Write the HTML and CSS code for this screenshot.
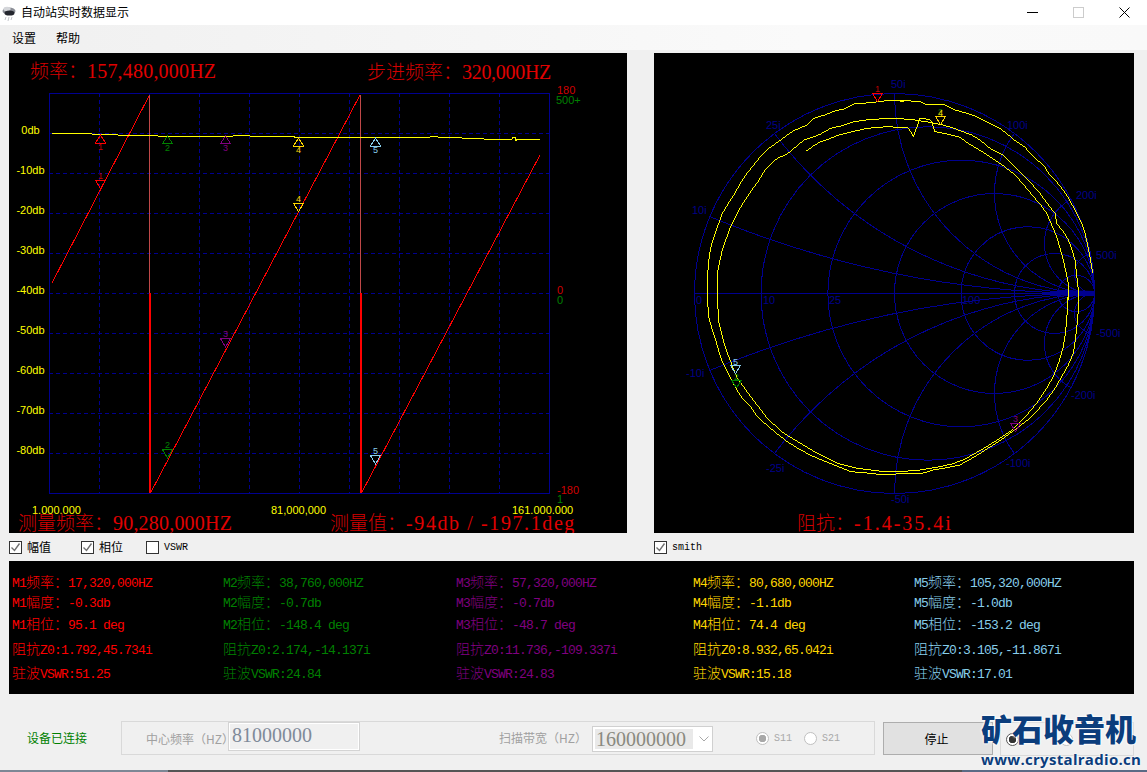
FILE: index.html
```html
<!DOCTYPE html>
<html lang="zh-CN">
<head>
<meta charset="utf-8">
<title>自动站实时数据显示</title>
<link rel="stylesheet" href="styles.css">
</head>
<body>
<div class="app">
  <header class="titlebar">
    <svg class="appicon" width="16" height="20" viewBox="0 0 16 20">
      <ellipse cx="8" cy="7" rx="6.5" ry="3.6" fill="#8b8e96"/>
      <ellipse cx="6" cy="5" rx="3.6" ry="2.2" fill="#d4d6da"/>
      <ellipse cx="8.5" cy="9" rx="5" ry="2.6" fill="#24262e"/>
      <path d="M5 13l-1 3M8 13l-1 4M11 13l-1 3" stroke="#c4c6cc" stroke-width="1" fill="none"/>
    </svg>
    <span class="title">自动站实时数据显示</span>
    <div class="winctl">
      <svg width="11" height="11" viewBox="0 0 11 11"><path d="M0 5.5H11" stroke="#000" fill="none"/></svg>
      <svg width="11" height="11" viewBox="0 0 11 11"><rect x=".5" y=".5" width="10" height="10" fill="none" stroke="#ccc"/></svg>
      <svg width="11" height="11" viewBox="0 0 11 11"><path d="M.5 .5L10.5 10.5M10.5 .5L.5 10.5" stroke="#000" fill="none"/></svg>
    </div>
  </header>
  <nav class="menubar"><span>设置</span><span>帮助</span></nav>

  <section class="charts">
    <svg class="panel chart" width="618" height="480" viewBox="9 53 618 480">
      <rect x="49.5" y="93.5" width="500" height="400" class="frame"/>
      <path class="grid" d="M99.5 93V493M149.5 93V493M199.5 93V493M249.5 93V493M299.5 93V493M349.5 93V493M399.5 93V493M449.5 93V493M499.5 93V493M49 133.5H549M49 173.5H549M49 213.5H549M49 253.5H549M49 293.5H549M49 333.5H549M49 373.5H549M49 413.5H549M49 453.5H549"/>
      <text class="big sp-a" x="30" y="78"><tspan class="cn">频率：</tspan>157,480,000HZ</text>
      <text class="big sp-d" x="367" y="79"><tspan class="cn">步进频率：</tspan>320,000HZ</text>
      <text class="ax yl mid" x="30.5" y="134">0db</text>
      <text class="ax yl mid" x="30.5" y="174">-10db</text>
      <text class="ax yl mid" x="30.5" y="214">-20db</text>
      <text class="ax yl mid" x="30.5" y="254">-30db</text>
      <text class="ax yl mid" x="30.5" y="294">-40db</text>
      <text class="ax yl mid" x="30.5" y="334">-50db</text>
      <text class="ax yl mid" x="30.5" y="374">-60db</text>
      <text class="ax yl mid" x="30.5" y="414">-70db</text>
      <text class="ax yl mid" x="30.5" y="454">-80db</text>
      <text class="ax rd" x="557" y="94">180</text>
      <text class="ax gn" x="556" y="104">500+</text>
      <text class="ax rd" x="557" y="294">0</text>
      <text class="ax gn" x="557" y="304">0</text>
      <text class="ax rd" x="557" y="494">-180</text>
      <text class="ax gn" x="557" y="503">1</text>
      <text class="ax yl" x="32" y="514">1.000.000</text>
      <text class="ax yl" x="271" y="514">81,000,000</text>
      <text class="ax yl" x="512" y="514">161.000.000</text>

      <polyline class="phase" points="52,283 149.5,95"/>
      <polyline class="phase" points="150.5,493 360,95"/>
      <polyline class="phase" points="361.5,493 540,155"/>
      <path class="wrap-top" d="M149.5 95V293M360.5 95V293"/>
      <path class="wrap-low" d="M150 293V493M361 293V493"/>
      <polyline class="amp" points="52,133 63,133 64,134 66,133 92,134 100,134 108,135 111,134 113,135 115,134 118,135 130,135 157,135 158,136 204,136 205,137 206,136 233,136 235,135 236,136 248,135.5 250,136 264,136 280,136 282,137 288,136 291,137 293,136 296,138 320,137.5 322,138 329,137 337,137 347,137 430,137 431,136 433,137 437,136 438,137 461,137 462,138 483,138 484,139 512,139 513,137 515,137 516,141 517,139 540,139"/>

      <g class="mk mk1"><polygon points="100.5,135 95.5,143 105.5,143"/><text class="mt" x="100.5" y="150">1</text>
        <polygon points="95.5,180.5 105.5,180.5 100.5,188.5"/><text class="mt" x="100.5" y="179">1</text></g>
      <g class="mk mk2"><polygon points="167.5,136 162.5,143.5 172.5,143.5"/><text class="mt" x="167.5" y="151">2</text>
        <polygon points="162.5,449.5 172.5,449.5 167.5,458"/><text class="mt" x="167.5" y="448">2</text></g>
      <g class="mk mk3"><polygon points="225.5,136 220.5,143.5 230.5,143.5"/><text class="mt" x="225.5" y="151">3</text>
        <polygon points="220.5,338.5 230.5,338.5 225.5,347"/><text class="mt" x="225.5" y="337">3</text></g>
      <g class="mk mk4"><polygon points="298.5,138 293.5,146 303.5,146"/><text class="mt" x="298.5" y="153">4</text>
        <polygon points="293.5,203.5 303.5,203.5 298.5,211.5"/><text class="mt" x="298.5" y="202">4</text></g>
      <g class="mk mk5"><polygon points="375.5,138 370.5,146 380.5,146"/><text class="mt" x="375.5" y="153">5</text>
        <polygon points="370.5,455.5 380.5,455.5 375.5,464"/><text class="mt" x="375.5" y="454">5</text></g>

      <text class="big sp-a" x="18" y="530"><tspan class="cn">测量频率：</tspan>90,280,000HZ</text>
      <text class="big sp-b" x="330" y="530"><tspan class="cn">测量值：</tspan>-94db / -197.1deg</text>
    </svg>

    <svg class="panel smith" width="480" height="480" viewBox="654 53 480 480">
      <defs><clipPath id="unit"><circle cx="894.5" cy="293.5" r="200"/></clipPath></defs>
      <g class="sg" clip-path="url(#unit)">
        <circle cx="927.8" cy="293.5" r="166.7"/>
        <circle cx="961.2" cy="293.5" r="133.3"/>
        <circle cx="994.5" cy="293.5" r="100"/>
        <circle cx="1027.8" cy="293.5" r="66.7"/>
        <circle cx="1054.5" cy="293.5" r="40"/>
        <circle cx="1076.3" cy="293.5" r="18.2"/>
        <circle cx="1094.5" cy="-706.5" r="1000"/>
        <circle cx="1094.5" cy="1293.5" r="1000"/>
        <circle cx="1094.5" cy="-106.5" r="400"/>
        <circle cx="1094.5" cy="693.5" r="400"/>
        <circle cx="1094.5" cy="93.5" r="200"/>
        <circle cx="1094.5" cy="493.5" r="200"/>
        <circle cx="1094.5" cy="193.5" r="100"/>
        <circle cx="1094.5" cy="393.5" r="100"/>
        <circle cx="1094.5" cy="243.5" r="50"/>
        <circle cx="1094.5" cy="343.5" r="50"/>
        <circle cx="1094.5" cy="273.5" r="20"/>
        <circle cx="1094.5" cy="313.5" r="20"/>
        <path d="M694 293.5H1095"/>
      </g>
      <circle class="sg" cx="894.5" cy="293.5" r="200"/>
      <polygon class="blob" points="1043,293 1065,290 1094,291 1094,296 1065,296"/>

      <text class="sl" x="891" y="88">50i</text>
      <text class="sl" x="766" y="129">25i</text>
      <text class="sl" x="692" y="214">10i</text>
      <text class="sl" x="1007" y="129">100i</text>
      <text class="sl" x="1076" y="199">200i</text>
      <text class="sl" x="1096" y="259">500i</text>
      <text class="sl" x="696" y="304">0</text>
      <text class="sl" x="763" y="304">10</text>
      <text class="sl" x="829" y="304">25</text>
      <text class="sl" x="962" y="304">100</text>
      <text class="sl" x="686" y="377">-10i</text>
      <text class="sl" x="766" y="472">-25i</text>
      <text class="sl" x="891" y="503">-50i</text>
      <text class="sl" x="1006" y="467">-100i</text>
      <text class="sl" x="1071" y="399">-200i</text>
      <text class="sl" x="1096" y="337">-500i</text>

      <g class="tr" transform="translate(654 60) scale(.33333)">
        <polyline points="160,700 161,650 163,610 168,575 175,545 187,510 205,460 222,432 240,405 258,372 275,345 295,320 315,295 345,265 380,240 400,225 420,212 440,203 460,195 480,175 512,165 545,152 570,147 600,132 650,128 700,122 750,122"/>
        <polyline points="190,700 190,640 197,605 205,570 217,535 230,500 255,450 272,422 290,395 310,368 330,335 350,312 370,295 400,282 420,265 450,240 475,232 500,222 530,205 565,197 600,185 650,178 700,176 750,175"/>
        <polyline points="457,273 478,258 500,245 530,235 555,225 600,214 640,205 700,200 750,203"/>
      </g>
      <g class="tr" transform="translate(900 60) scale(.33333)">
        <polyline points="0,125 20,122 60,125 75,132 135,135 165,150 200,160 230,170 265,188 300,205 322,222 340,238 375,262 405,295 430,315 450,345 478,375 500,405 515,432 530,460 545,490 555,520 563,555 570,590 578,640"/>
        <polyline points="535,720 535,690 530,645 525,600 515,565 505,540 490,515 470,490 465,460 440,428 420,400 395,372 370,345 340,315 310,285 270,265 240,240 215,225 170,208 130,195 90,187 45,180 0,176"/>
        <polyline points="505,720 505,670 490,600 470,530 455,495 440,460 420,432 400,410 372,375 345,345 320,325 300,310 262,285 230,265 205,250 180,232 140,222 105,215 95,185 88,178 60,175 40,230 25,203 0,203"/>
      </g>
      <g class="tr" transform="translate(654 290) scale(.33333)">
        <polyline points="160,10 162,50 165,85 175,120 185,150 195,185 205,215 220,245 235,275 250,302 265,325 290,350 310,380 330,398 350,415 375,436 400,455 440,480 465,493 490,505 540,525 590,545 650,550 690,555 750,550"/>
        <polyline points="190,10 192,55 195,100 205,140 215,175 232,220 250,265 270,292 290,320 315,352 340,385 365,408 390,430 440,460 490,490 550,520 610,535 690,545 750,545"/>
      </g>
      <g class="tr" transform="translate(900 290) scale(.33333)">
        <polyline points="0,550 60,552 100,540 140,533 180,525 210,508 240,490 275,468 310,445 350,415 390,385 415,358 440,330 465,295 485,260 505,225 520,190 526,150 530,115 535,60 535,0"/>
        <polyline points="0,545 60,540 120,530 155,522 190,510 225,490 260,470 295,448 330,425 372,385 410,340 437,300 460,260 477,215 490,170 496,130 500,90 503,45 505,0"/>
      </g>

      <g class="mk mk1"><polygon points="872.5,93.5 882.5,93.5 877.5,101.5"/><text class="mt" x="877.5" y="92">1</text></g>
      <g class="mk mk3"><polygon points="1010.5,423.5 1020.5,423.5 1015.5,431.5"/><text class="mt" x="1015.5" y="422">3</text></g>
      <g class="mk mk2"><polygon points="731.5,380.5 741.5,380.5 736.5,387.5"/><text class="mt" x="736.5" y="380">2</text></g>
      <g class="mk mk5"><polygon points="730.5,365.5 740.5,365.5 735.5,373.5"/><text class="mt" x="735.5" y="365">5</text></g>
      <g class="mk mk2"><text class="mt" x="940.5" y="115">2</text></g>
      <g class="mk mk4"><polygon points="935.5,116.5 945.5,116.5 940.5,124.5"/><text class="mt" x="940.5" y="116">4</text></g>

      <text class="big sp-c" x="797" y="530"><tspan class="cn">阻抗：</tspan>-1.4-35.4i</text>
    </svg>
  </section>

  <section class="checks">
    <label class="check w72"><span class="box"><svg width="11" height="11" viewBox="0 0 11 11"><path d="M1.5 5.5L4.5 8.5L9.5 1.5"/></svg></span><span class="lab">幅值</span></label>
    <label class="check w65"><span class="box"><svg width="11" height="11" viewBox="0 0 11 11"><path d="M1.5 5.5L4.5 8.5L9.5 1.5"/></svg></span><span class="lab">相位</span></label>
    <label class="check w508"><span class="box"></span><span class="lat">VSWR</span></label>
    <label class="check"><span class="box"><svg width="11" height="11" viewBox="0 0 11 11"><path d="M1.5 5.5L4.5 8.5L9.5 1.5"/></svg></span><span class="lat">smith</span></label>
  </section>

  <section class="data">
    <div class="cell c1">M1<span class="cn">频率：</span>17,320,000HZ</div>
    <div class="cell c1">M1<span class="cn">幅度：</span>-0.3db</div>
    <div class="cell c1">M1<span class="cn">相位：</span>95.1 deg</div>
    <div class="cell c1"><span class="cn">阻抗</span>Z0:1.792,45.734i</div>
    <div class="cell c1"><span class="cn">驻波</span>VSWR:51.25</div>

    <div class="cell c2">M2<span class="cn">频率：</span>38,760,000HZ</div>
    <div class="cell c2">M2<span class="cn">幅度：</span>-0.7db</div>
    <div class="cell c2">M2<span class="cn">相位：</span>-148.4 deg</div>
    <div class="cell c2"><span class="cn">阻抗</span>Z0:2.174,-14.137i</div>
    <div class="cell c2"><span class="cn">驻波</span>VSWR:24.84</div>

    <div class="cell c3">M3<span class="cn">频率：</span>57,320,000HZ</div>
    <div class="cell c3">M3<span class="cn">幅度：</span>-0.7db</div>
    <div class="cell c3">M3<span class="cn">相位：</span>-48.7 deg</div>
    <div class="cell c3"><span class="cn">阻抗</span>Z0:11.736,-109.337i</div>
    <div class="cell c3"><span class="cn">驻波</span>VSWR:24.83</div>

    <div class="cell c4">M4<span class="cn">频率：</span>80,680,000HZ</div>
    <div class="cell c4">M4<span class="cn">幅度：</span>-1.1db</div>
    <div class="cell c4">M4<span class="cn">相位：</span>74.4 deg</div>
    <div class="cell c4"><span class="cn">阻抗</span>Z0:8.932,65.042i</div>
    <div class="cell c4"><span class="cn">驻波</span>VSWR:15.18</div>

    <div class="cell c5">M5<span class="cn">频率：</span>105,320,000HZ</div>
    <div class="cell c5">M5<span class="cn">幅度：</span>-1.0db</div>
    <div class="cell c5">M5<span class="cn">相位：</span>-153.2 deg</div>
    <div class="cell c5"><span class="cn">阻抗</span>Z0:3.105,-11.867i</div>
    <div class="cell c5"><span class="cn">驻波</span>VSWR:17.01</div>
  </section>

  <section class="controls">
    <div class="status">设备已连接</div>
    <div class="group params">
      <span class="plabel">中心频率（HZ）</span>
      <span class="field">81000000</span>
      <span class="plabel second">扫描带宽（HZ）</span>
      <span class="select"><span class="selval">160000000</span>
        <svg width="10" height="6" viewBox="0 0 10 6"><path d="M.5 .5L5 5L9.5 .5"/></svg></span>
      <span class="radio on first"></span><span class="rlabel">S11</span>
      <span class="radio next"></span><span class="rlabel">S21</span>
    </div>
    <button class="stop">停止</button>
    <div class="group modes">
      <span class="radio dark"></span>
      <span class="radio gap"></span>
    </div>
  </section>
  <div class="strip"></div>

  <div class="watermark">
    <div class="wm-cn">矿石收音机</div>
    <div class="wm-en">www.crystalradio.cn</div>
  </div>
</div>
</body>
</html>
```

FILE: styles.css
```css
* { box-sizing: border-box; }
html, body { margin: 0; padding: 0; }
body { width: 1147px; height: 772px; overflow: hidden; background: #f0f0f0; font-family: "Noto Sans CJK SC", sans-serif; color: #000; }
.app { position: relative; width: 1147px; height: 772px; display: flex; flex-direction: column; }

.titlebar { height: 25px; background: #fff; display: flex; align-items: center; position: relative; }
.appicon { margin-left: 1px; margin-top: 2px; flex: none; }
.title { margin-left: 4px; font-size: 12px; line-height: 25px; margin-top: -2px; }
.winctl { margin-left: auto; margin-right: 17px; display: flex; gap: 35px; margin-top: -1px; }
.winctl svg { display: block; }

.menubar { height: 25px; display: flex; padding-left: 12px; gap: 20px; font-size: 12px; line-height: 25px; background: linear-gradient(90deg, #f0f0f0, #fafafa 70%, #f9f9f9); }

.charts { height: 483px; padding: 3px 0 0 9px; display: flex; gap: 27px; }
.panel { display: block; background: #000; flex: none; }

.frame { fill: none; stroke: #000090; shape-rendering: crispEdges; }
.grid { fill: none; stroke: #000090; stroke-dasharray: 4 3; shape-rendering: crispEdges; }

.big { font-family: "Liberation Serif", serif; font-size: 20px; fill: #e00000; white-space: pre; }
.sp-a { letter-spacing: .2px; }
.sp-b { letter-spacing: 1.6px; }
.sp-c { letter-spacing: 2px; }
.sp-d { letter-spacing: -.3px; }
.cn { font-family: "Noto Sans CJK SC", sans-serif; font-weight: 300; letter-spacing: 0; }
.big .cn { font-size: 19px; fill: #d40000; }

.ax { font-family: "Liberation Sans", sans-serif; font-size: 11px; }
.mid { text-anchor: middle; }
.yl { fill: #ffff00; }
.rd { fill: #d00000; }
.gn { fill: #008000; }

.phase { fill: none; stroke: #ff0000; stroke-width: 1; shape-rendering: crispEdges; }
.wrap-top { fill: none; stroke: #c04848; stroke-width: 1; shape-rendering: crispEdges; }
.wrap-low { fill: none; stroke: #ff0000; stroke-width: 2; shape-rendering: crispEdges; }
.amp { fill: none; stroke: #ffff00; stroke-width: 1; shape-rendering: crispEdges; }

.mk polygon { fill: none; stroke-width: 1; shape-rendering: crispEdges; }
.mt { font-family: "Liberation Sans", sans-serif; font-size: 9px; text-anchor: middle; }
.mk1 polygon { stroke: #ff0000; } .mk1 .mt { fill: #c00000; }
.mk2 polygon { stroke: #008000; } .mk2 .mt { fill: #008000; }
.mk3 polygon { stroke: #800080; } .mk3 .mt { fill: #800080; }
.mk4 polygon { stroke: #ffd700; } .mk4 .mt { fill: #ffd700; }
.mk5 polygon { stroke: #87ceeb; } .mk5 .mt { fill: #87ceeb; }

.sg, .sg circle { fill: none; }
.sg { stroke: #000090; stroke-width: 1; shape-rendering: crispEdges; }
.sg path { fill: none; }
.blob { fill: #000090; }
.sl { font-family: "Liberation Sans", sans-serif; font-size: 11px; fill: #00008b; }
.tr polyline { fill: none; stroke: #ffff00; stroke-width: 3; shape-rendering: crispEdges; }

.checks { height: 28px; padding-left: 9px; display: flex; align-items: center; }
.check { display: flex; align-items: center; gap: 5px; flex: none; }
.w72 { width: 72px; } .w65 { width: 65px; } .w508 { width: 508px; }
.box { width: 13px; height: 13px; border: 1px solid #333; background: #fff; display: block; flex: none; }
.box svg { display: block; }
.box path { fill: none; stroke: #707070; stroke-width: 1.4; }
.lab { font-size: 12px; line-height: 14px; }
.lat { font-family: "Liberation Mono", monospace; font-size: 10px; letter-spacing: 0; }

.data { height: 133px; margin-left: 9px; width: 1125px; background: #000; padding: 13px 0 0 3px; display: grid; grid-template-columns: 211px 233px 237px 221px 1fr; grid-template-rows: 20px 20px 22px 25px 24px; grid-auto-flow: column; }
.cell { font-family: "Liberation Mono", monospace; font-size: 13px; letter-spacing: -.8px; white-space: pre; line-height: 20px; align-self: end; }
.cell .cn { font-size: 14px; }
.c1 { color: #ff0000; } .c2 { color: #008000; } .c3 { color: #800080; } .c4 { color: #ffd700; } .c5 { color: #87ceeb; }

.controls { height: 76px; padding-top: 27px; display: flex; align-items: flex-start; }
.status { width: 121px; padding-left: 27px; line-height: 33px; font-size: 12px; color: #008000; }
.group { border: 1px solid #d9d9d9; height: 34px; display: flex; align-items: center; flex: none; }
.params { width: 754px; padding-left: 24px; }
.plabel { width: 82px; font-size: 12px; color: #a0a0a0; white-space: nowrap; flex: none; }
.second { margin-left: 139px; width: 93px; margin-top: -2px; }
.field { width: 132px; height: 29px; border: 1px solid #d4d4d4; box-shadow: inset 0 0 0 1px #fff; padding-left: 3px; font-family: "Liberation Serif", serif; font-size: 20px; line-height: 24px; color: #7f8a99; background: #f0f0f0; flex: none; margin-top: -3px; }
.select { width: 121px; height: 26px; border: 1px solid #d0d0d0; background: #fff; display: flex; align-items: center; padding: 2px; flex: none; margin-top: 1px; }
.selval { width: 98px; height: 20px; background: #e9e9e9; font-family: "Liberation Serif", serif; font-size: 20px; line-height: 20px; color: #8a8a80; padding-left: 1px; overflow: hidden; }
.select svg { margin-left: 6px; }
.select path { fill: none; stroke: #a8a8a8; }
.radio { width: 13px; height: 13px; border-radius: 50%; border: 1px solid #c0c0c0; background: #fff; flex: none; position: relative; }
.radio.on { background: radial-gradient(circle, #a8a8a8 0 3.5px, #fff 4px); }
.radio.dark { background: radial-gradient(circle, #333 0 3.5px, #fff 4px); border-color: #555; }
.radio.first { margin-left: 43px; }
.radio.next { margin-left: 12px; }
.radio.gap { margin-left: 41px; }
.rlabel { margin-left: 5px; width: 18px; font-family: "Liberation Mono", monospace; font-size: 10px; color: #a8a8a8; }
.stop { margin-left: 8px; margin-top: 1px; width: 110px; height: 33px; border: 1px solid #adadad; background: #e1e1e1; font-family: "Noto Sans CJK SC", sans-serif; font-size: 12px; padding: 0 3px 0 0; color: #000; }
.modes { margin-left: 7px; width: 134px; padding-left: 5px; margin-top: 1px; }

.strip { height: 2px; background: linear-gradient(90deg, #7d8795 0 168px, #555 168px 962px, #5a6a85 962px); }

.watermark { position: absolute; left: 981px; top: 708px; width: 166px; }
.wm-cn { font-family: "Noto Sans CJK SC", sans-serif; font-weight: 900; font-size: 31px; line-height: 40px; color: #0b3d7c; text-shadow: 0 0 2px #fff, 0 0 2px #fff, 0 0 3px #fff; white-space: nowrap; }
.wm-en { font-family: "Open Sans", sans-serif; font-weight: 700; font-size: 15px; line-height: 16px; margin-top: 3px; letter-spacing: .3px; color: #0b3d7c; text-shadow: 0 0 2px #fff, 0 0 2px #fff; white-space: nowrap; }
```
